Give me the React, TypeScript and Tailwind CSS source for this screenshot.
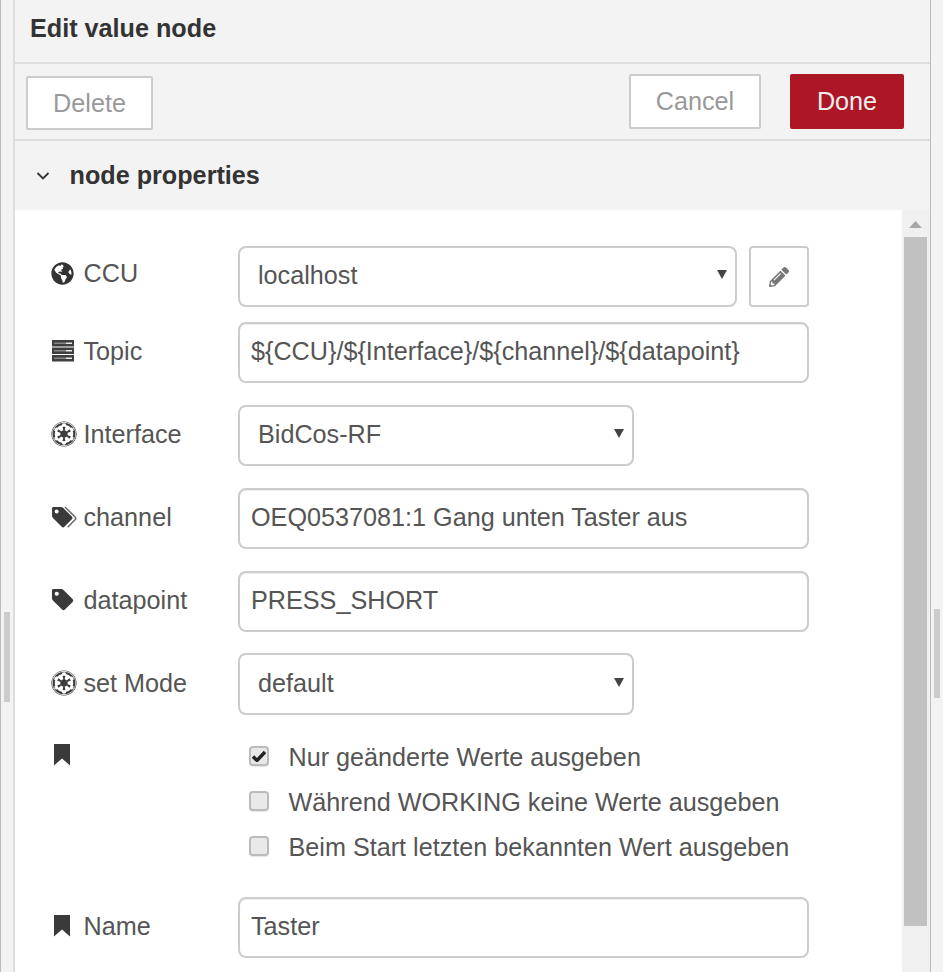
import React from "react";
import { FaGlobeAmericas, FaEmpire, FaPencilAlt } from "react-icons/fa";

const font = { fontFamily: '"Liberation Sans", Arial, sans-serif' };

function Bookmark() {
  return (
    <svg width="18" height="24" viewBox="0 0 18 24" className="block">
      <path d="M1 1h16v21.5l-8-7-8 7z" fill="#3a3a3a" />
    </svg>
  );
}

function ServerIcon() {
  return (
    <svg width="24" height="22" viewBox="0 0 24 22" className="block">
      {[0, 7.5, 15].map((y) => (
        <g key={y}>
          <rect x="1" y={y} width="22" height="6.5" fill="#3f3f3f" />
          <rect x="3" y={y + 2.5} width="12" height="1.5" fill="#888" />
          <rect x="15" y={y + 2.5} width="6" height="1.5" fill="#e8e8e8" />
        </g>
      ))}
    </svg>
  );
}

const tagPath =
  "M2.5 1H10.5Q12 1 13 2L22.5 11.5Q24 13 22.5 14.5L14.5 22.5Q13 24 11.5 22.5L2 13Q1 12 1 10.5V2.5Q1 1 2.5 1ZM6 3.8A2.2 2.2 0 1 0 6 8.2A2.2 2.2 0 1 0 6 3.8Z";

function TagIcon() {
  return (
    <svg width="24" height="24" viewBox="0 0 25 25" className="block">
      <path d={tagPath} fill="#3a3a3a" fillRule="evenodd" />
    </svg>
  );
}

function TagsIcon() {
  return (
    <svg width="26" height="23" viewBox="0 0 28 25" className="block">
      <path d={tagPath} fill="#3a3a3a" fillRule="evenodd" />
      <path d="M15 1L26 12Q27.5 13.5 26 15L18 23" stroke="#666" strokeWidth="1.6" fill="none" />
    </svg>
  );
}

function Row({ icon, label, children, mt, lift = "-mt-[3px]" }: { icon: React.ReactNode; label?: string; children: React.ReactNode; mt: string; lift?: string }) {
  return (
    <div className={`flex items-center ${mt}`}>
      <div className={`w-[223px] pl-[36px] flex items-center shrink-0 ${lift}`}>
        <span className="w-[32.5px] shrink-0 flex items-center">{icon}</span>
        <span className="text-[25.2px] leading-[30px] text-[#555]">{label}</span>
      </div>
      {children}
    </div>
  );
}

function Field({ value }: { value: string }) {
  return (
    <input
      readOnly
      value={value}
      style={font}
      className="w-[571px] h-[61px] border-2 border-[#ccc] rounded-[8px] px-[11px] pb-[3px] text-[25.2px] text-[#555] bg-white outline-none shadow-[inset_0_1px_1px_rgba(0,0,0,0.075)]"
    />
  );
}

function Select({ value, w, h = "h-[61px]", lift = "-mt-[2px]" }: { value: string; w: string; h?: string; lift?: string }) {
  return (
    <div className={`${w} ${h} border-2 border-[#ccc] rounded-[8px] pl-[18px] pr-[8px] flex items-center justify-between text-[25.2px] text-[#555] bg-white`}>
      <span className={lift}>{value}</span>
      <svg width="10" height="10" viewBox="0 0 10 10" className="-mt-[5px]">
        <path d="M0 1h10L5 10z" fill="#444" />
      </svg>
    </div>
  );
}

function Check({ checked, label }: { checked?: boolean; label: string }) {
  return (
    <div className="flex items-center h-[45px]">
      <div className="w-[20px] h-[20px] rounded-[4px] border-2 border-[#bbb] bg-[#e9e9e9] shadow-[0_1px_1px_rgba(0,0,0,0.1)] flex items-center justify-center shrink-0 -mt-[2px]">
        {checked && (
          <svg width="14" height="12" viewBox="0 0 14 12">
            <path d="M1 6.5l4 4L13 2" stroke="#222" strokeWidth="3.4" fill="none" />
          </svg>
        )}
      </div>
      <span className="ml-[19.5px] text-[25.2px] leading-[30px] text-[#555]">{label}</span>
    </div>
  );
}

export default function App() {
  return (
    <div style={font} className="w-[943px] h-[972px] overflow-hidden bg-[#f3f3f3] flex">
      <div className="w-[1px] bg-[#bbb] shrink-0" />
      <div className="w-[12px] shrink-0 flex justify-center">
        <div className="w-[6px] h-[90px] mt-[612px] bg-[#ccc]" />
      </div>
      <div className="w-[2px] bg-[#ddd] shrink-0" />
      <div className="w-[915px] shrink-0 flex flex-col">
        <div className="h-[64px] border-b-2 border-[#ddd] pl-[15px] flex items-center shrink-0">
          <span className="text-[25.2px] font-bold text-[#333] -mt-[5px]">Edit value node</span>
        </div>
        <div className="h-[77px] border-b-2 border-[#ddd] pl-[11px] pr-[26px] flex items-start shrink-0">
          <button className="mt-[12px] w-[127px] h-[54px] border-2 border-[#ccc] bg-white text-[25.2px] text-[#999] rounded-[2px] pt-[2px]">Delete</button>
          <div className="ml-auto flex mt-[10px]">
            <button className="w-[132px] h-[55px] border-2 border-[#ccc] bg-white text-[25.2px] text-[#999] rounded-[2px]">Cancel</button>
            <button className="ml-[29px] w-[114px] h-[55px] bg-[#ad1625] text-[25.2px] text-[#eee] rounded-[2px]">Done</button>
          </div>
        </div>
        <div className="h-[69px] flex items-center pl-[21px] shrink-0">
          <svg width="14" height="10" viewBox="0 0 14 10" className="mr-[19.5px]">
            <path d="M1.5 2l5.5 5.5L12.5 2" stroke="#333" strokeWidth="1.8" fill="none" />
          </svg>
          <span className="text-[25.2px] font-bold text-[#333]">node properties</span>
        </div>
        <div className="flex-1 flex min-h-0">
          <div className="w-[887px] bg-white shrink-0 pt-[36px]">
            <Row mt="" lift="-mt-[7px]" label="CCU" icon={<FaGlobeAmericas size={23} color="#333" />}>
              <Select value="localhost" w="w-[499px]" />
              <div className="ml-[12px] w-[60px] h-[61px] border-2 border-[#ccc] rounded-[4px] flex items-center justify-center">
                <FaPencilAlt size={20} color="#777" />
              </div>
            </Row>
            <Row mt="mt-[15px]" label="Topic" icon={<ServerIcon />}>
              <Field value="${CCU}/${Interface}/${channel}/${datapoint}" />
            </Row>
            <Row mt="mt-[22px]" label="Interface" icon={<FaEmpire size={26} color="#3c3c3c" />}>
              <Select value="BidCos-RF" w="w-[396px]" />
            </Row>
            <Row mt="mt-[22px]" label="channel" icon={<TagsIcon />}>
              <Field value="OEQ0537081:1 Gang unten Taster aus" />
            </Row>
            <Row mt="mt-[22px]" label="datapoint" icon={<TagIcon />}>
              <Field value="PRESS_SHORT" />
            </Row>
            <Row mt="mt-[21px]" lift="-mt-[2px]" label="set Mode" icon={<FaEmpire size={26} color="#3c3c3c" />}>
              <Select value="default" w="w-[396px]" h="h-[62px]" lift="mt-0" />
            </Row>
            <div className="flex mt-[19px] pl-[36px]">
              <div className="w-[198px] pl-[2px] pt-[9px] shrink-0"><Bookmark /></div>
              <div className="flex flex-col">
                <Check checked label="Nur geänderte Werte ausgeben" />
                <Check label="Während WORKING keine Werte ausgeben" />
                <Check label="Beim Start letzten bekannten Wert ausgeben" />
              </div>
            </div>
            <Row mt="mt-[28px]" label="Name" icon={<span className="pl-[2px]"><Bookmark /></span>}>
              <Field value="Taster" />
            </Row>
          </div>
          <div className="w-[28px] bg-[#f0f0f0] shrink-0 flex flex-col items-start">
            <svg width="13" height="7" viewBox="0 0 13 7" className="mt-[11px] ml-[7px]">
              <path d="M0 7L6.5 0l6.5 7z" fill="#a8a8a8" />
            </svg>
            <div className="w-[23px] h-[689px] ml-[2px] bg-[#c1c1c1] mt-[9px]" />
          </div>
        </div>
      </div>
      <div className="w-[1px] bg-[#bbb] shrink-0" />
      <div className="flex-1 flex justify-center">
        <div className="w-[6px] h-[89px] mt-[609px] bg-[#ccc]" />
      </div>
    </div>
  );
}
